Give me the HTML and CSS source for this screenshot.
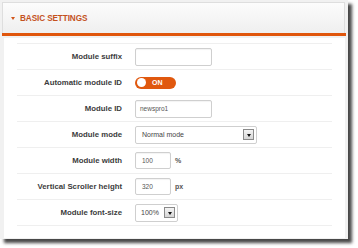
FILE: index.html
```html
<!DOCTYPE html>
<html>
<head>
<meta charset="utf-8">
<link rel="stylesheet" href="styles.css">
</head>
<body>
<div class="frame">
  <div class="header">
    <span class="caret"></span>
    <span class="title">BASIC SETTINGS</span>
  </div>
  <div class="bar"></div>
  <div class="panel">
    <div class="row">
      <div class="label">Module suffix</div>
      <div class="field"><span class="input wide"></span></div>
    </div>
    <div class="row">
      <div class="label">Automatic module ID</div>
      <div class="field"><span class="toggle"><span class="knob"></span><span class="on">ON</span></span></div>
    </div>
    <div class="row">
      <div class="label">Module ID</div>
      <div class="field"><span class="input wide">newspro1</span></div>
    </div>
    <div class="row">
      <div class="label">Module mode</div>
      <div class="field"><span class="select long"><span class="stext">Normal mode</span><span class="sbtn"><span class="tri"></span></span></span></div>
    </div>
    <div class="row">
      <div class="label">Module width</div>
      <div class="field"><span class="input short">100</span><span class="unit">%</span></div>
    </div>
    <div class="row">
      <div class="label">Vertical Scroller height</div>
      <div class="field"><span class="input short">320</span><span class="unit">px</span></div>
    </div>
    <div class="row last">
      <div class="label">Module font-size</div>
      <div class="field"><span class="select small"><span class="stext">100%</span><span class="sbtn"><span class="tri"></span></span></span></div>
    </div>
  </div>
</div>
</body>
</html>
```
FILE: styles.css
```css
html, body {
  margin: 0;
  padding: 0;
  background: #ffffff;
}
body {
  font-family: "Liberation Sans", Arial, sans-serif;
  width: 358px;
  height: 248px;
  overflow: hidden;
}
.frame {
  width: 348px;
  height: 239px;
  background: #f1f1f1;
  box-shadow: 4px 4px 3px rgba(40, 40, 40, 0.85);
  padding-top: 2px;
  box-sizing: border-box;
}
.header {
  margin: 0 3px 0 2px;
  height: 31px;
  box-sizing: border-box;
  border: 1px solid #dedede;
  border-bottom: none;
  background: linear-gradient(#fcfcfc, #efefef);
  display: flex;
  align-items: center;
  padding-left: 8px;
}
.caret {
  width: 0;
  height: 0;
  border-left: 2.5px solid transparent;
  border-right: 2.5px solid transparent;
  border-top: 3px solid #d2561a;
  margin-right: 5px;
  margin-top: 1px;
}
.title {
  color: #c4521e;
  font-weight: bold;
  font-size: 8.2px;
  letter-spacing: -0.1px;
}
.bar {
  height: 3px;
  margin: 0 2px 0 2px;
  background: #e0560c;
}
.panel {
  margin: 2px 3px 0 4px;
  height: 200px;
  background: #ffffff;
  padding: 5px 13px 0 13px;
  box-sizing: border-box;
}
.row {
  display: flex;
  align-items: center;
  height: 26px;
  border-top: 1px solid #efefef;
  box-sizing: border-box;
}
.row.last {
  height: 27px;
  border-bottom: 1px solid #efefef;
}
.label {
  width: 105px;
  text-align: right;
  font-weight: bold;
  font-size: 7.8px;
  color: #3c3c3c;
  flex: none;
}
.field {
  margin-left: 13px;
  display: flex;
  align-items: center;
}
.input {
  display: inline-flex;
  align-items: center;
  height: 18px;
  box-sizing: border-box;
  border: 1px solid #cfcfcf;
  border-radius: 2px;
  background: #fff;
  padding-left: 4px;
  font-size: 6.5px;
  color: #555;
  box-shadow: inset 0 1px 1px rgba(0,0,0,0.05);
}
.input.wide { width: 77px; }
.input.short { width: 36px; height: 17px; padding-left: 6px; }
.unit {
  margin-left: 4px;
  font-size: 7px;
  font-weight: bold;
  color: #555;
}
.toggle {
  position: relative;
  display: inline-flex;
  align-items: center;
  width: 41px;
  height: 12px;
  border-radius: 6px;
  background: #e0580e;
}
.knob {
  width: 9px;
  height: 9px;
  border-radius: 50%;
  background: #fff;
  margin-left: 2px;
}
.on {
  color: #fff;
  font-weight: bold;
  font-size: 7px;
  margin-left: 6px;
}
.select {
  display: inline-flex;
  align-items: center;
  justify-content: space-between;
  height: 18px;
  box-sizing: border-box;
  border: 1px solid #cfcfcf;
  border-radius: 2px;
  background: #fff;
  padding: 0 2px 0 6px;
  font-size: 7px;
  color: #444;
}
.select.long { width: 122px; }
.select.small { width: 43px; padding-left: 5px; }
.sbtn {
  width: 11px;
  height: 11px;
  box-sizing: border-box;
  border: 1px solid #8a8a8a;
  background: linear-gradient(#f4f4f4, #d6d6d6);
  display: flex;
  align-items: center;
  justify-content: center;
}
.tri {
  width: 0;
  height: 0;
  border-left: 2.5px solid transparent;
  border-right: 2.5px solid transparent;
  border-top: 3px solid #111;
  margin-top: 1px;
}
```
